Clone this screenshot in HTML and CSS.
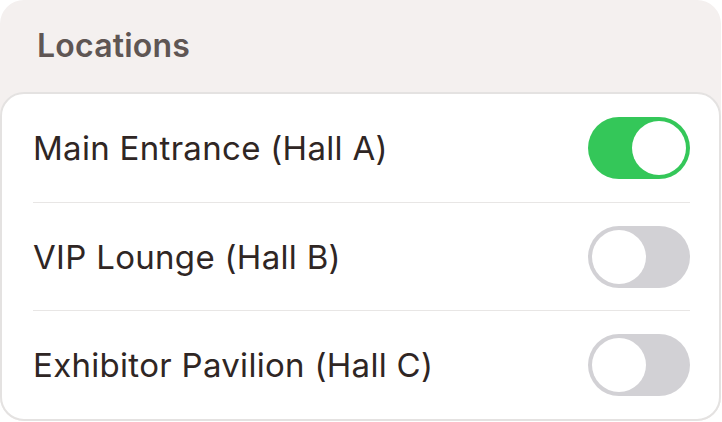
FILE: index.html
```html
<!DOCTYPE html>
<html>
<head>
<meta charset="utf-8">
<link rel="stylesheet" href="styles.css">
</head>
<body>
<section class="group">
  <h2 class="group-title">Locations</h2>
  <div class="card">
    <div class="row">
      <span class="label">Main Entrance (Hall A)</span>
      <span class="toggle on"><span class="knob"></span></span>
    </div>
    <div class="row">
      <span class="label">VIP Lounge (Hall B)</span>
      <span class="toggle"><span class="knob"></span></span>
    </div>
    <div class="row">
      <span class="label">Exhibitor Pavilion (Hall C)</span>
      <span class="toggle"><span class="knob"></span></span>
    </div>
  </div>
</section>
</body>
</html>
```
FILE: styles.css
```css
html, body {
  margin: 0;
  padding: 0;
  background: #ffffff;
}
body {
  width: 722px;
  height: 422px;
  font-family: Inter, "Noto Sans", sans-serif;
}
.group {
  width: 721px;
  height: 421px;
  background: #f4f0ef;
  border-radius: 24px;
  display: flex;
  flex-direction: column;
  box-sizing: border-box;
}
.group-title {
  margin: 0;
  height: 92px;
  box-sizing: border-box;
  padding: 26px 0 0 37px;
  font-size: 32px;
  font-weight: 600;
  color: #5f5654;
  line-height: 40px;
  letter-spacing: 0.2px;
}
.card {
  flex: 1;
  background: #ffffff;
  border: 2px solid #e4e2e1;
  border-radius: 24px;
  display: flex;
  flex-direction: column;
  padding: 0 29px 0 31px;
}
.row {
  flex: 1;
  display: flex;
  align-items: center;
  justify-content: space-between;
  border-bottom: 1px solid #e8e6e5;
}
.row:last-child {
  border-bottom: none;
}
.label {
  font-size: 33px;
  color: #2f2624;
  letter-spacing: 0.3px;
}
.toggle {
  width: 102px;
  height: 62px;
  border-radius: 31px;
  background: #d2d1d5;
  display: flex;
  align-items: center;
  padding: 0 4px;
  box-sizing: border-box;
}
.toggle .knob {
  width: 54px;
  height: 54px;
  border-radius: 50%;
  background: #ffffff;
}
.toggle.on {
  background: #34c759;
  justify-content: flex-end;
}
```
